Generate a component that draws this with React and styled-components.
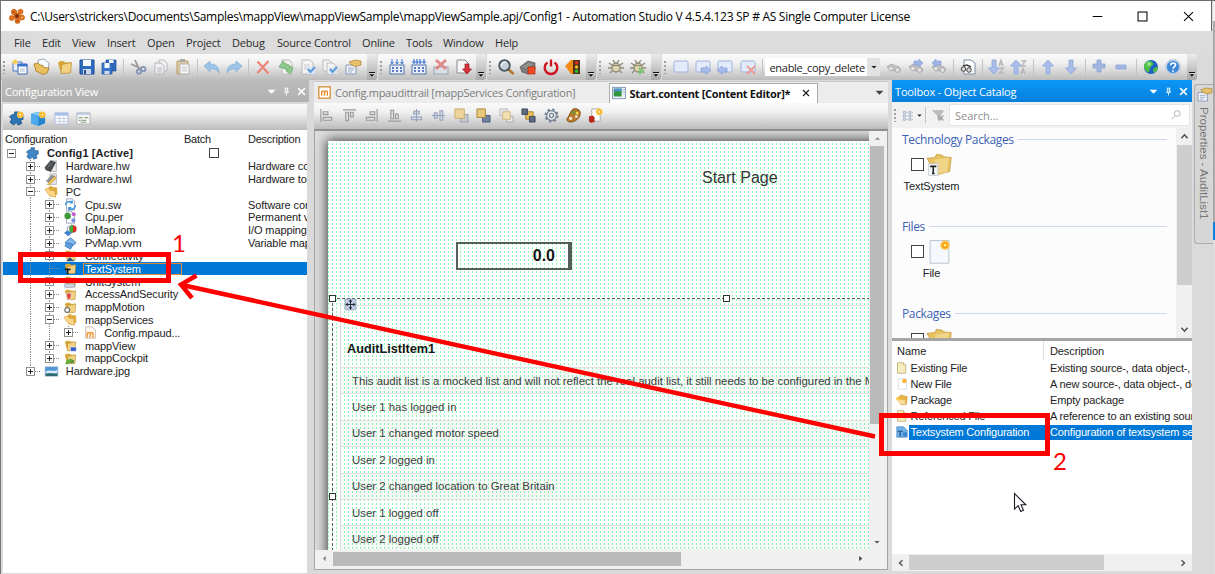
import React from "react";
import styled, { createGlobalStyle, css } from "styled-components";

const ui = `"Open Sans", "Noto Sans", sans-serif`;
const classic = `"Liberation Sans", Arial, sans-serif`;

const Global = createGlobalStyle`
  * { box-sizing: border-box; }
  body { margin: 0; background: #d8d8d8; overflow: hidden; font-family: ${ui}; }
`;

/* ---------- icons ---------- */

const folder = (
  <>
    <path d="M1 4l2-2 4 0 1.500 1.500 5 0 0 9-9.500 1.500z" fill="#d9a83a" />
    <path d="M4.500 5.500l10-2-1 10.500-9.500 0.500z" fill="#f3d283" stroke="#b98a2b" strokeWidth=".7" />
  </>
);
const pageShape = <path d="M3 1h7l3 3v11H3z" fill="#fdfdfd" stroke="#8f9db5" />;
const gear = (c) => (
  <g stroke={c} fill="none">
    <circle cx="8" cy="8" r="6.500" strokeWidth="2" strokeDasharray="2.550 2.550" />
    <circle cx="8" cy="8" r="5.200" strokeWidth="1.300" fill="#eef1f4" />
    <circle cx="8" cy="8" r="2.200" strokeWidth="1.400" />
  </g>
);
const bubble = <rect x="1" y="2" width="14" height="11" rx="1.500" fill="#e3ebfa" stroke="#9db2de" />;
const binoculars = (
  <g fill="#c4c4c4" stroke="#a6a6a6" strokeWidth=".8">
    <path d="M1 8l4-3 8 3 2 3-3 2.500-4-2-2 .5z" />
    <circle cx="5" cy="9.500" r="2.300" fill="#e4e4e4" />
    <circle cx="11.500" cy="11" r="2.300" fill="#e4e4e4" />
  </g>
);
const cluster = (c, d) => (
  <g fill={c} stroke={d} strokeWidth=".7">
    <circle cx="5" cy="4" r="2.700" />
    <circle cx="11.500" cy="3.700" r="2.500" />
    <circle cx="13" cy="9.500" r="2.500" />
    <circle cx="8.500" cy="13" r="2.500" />
    <circle cx="2.800" cy="10" r="2.500" />
    <circle cx="8" cy="8" r="3" />
  </g>
);
/* a four-armed block cross, tilted */
const puzzle = (c, d) => (
  <path
    d="M6 1h4.500v3.500H15V9h-2.500l1 4.500-4 1.500-1.500-3-3 3L1 12l2-3.500L.5 6 4 3.500l2 1z"
    fill={c}
    stroke={d}
    strokeWidth=".8"
  />
);
const bug = (
  <g stroke="#8f8975" fill="none" strokeWidth="1.300">
    <path d="M1 4l4 3M15 4l-4 3M0 9h4M12 9h4M2 14l3-3M14 14l-3-3M5 1l2 3M11 1l-2 3" />
    <ellipse cx="8" cy="8.500" rx="4" ry="4.500" fill="#dcd6ae" />
    <path d="M4.500 6.500h7" />
  </g>
);
const star = (
  <g>
    <circle cx="12" cy="4" r="3.600" fill="#ffc648" />
    <circle cx="12" cy="4" r="1.800" fill="#fff2a8" stroke="#f0a010" />
  </g>
);
const check = <path d="M8 10l2.500 3L15 8" fill="none" stroke="#5f9bd6" strokeWidth="2" />;
const binary = (
  <g>
    <rect x="1" y="6" width="14" height="9" fill="#e8eefc" stroke="#5672ad" />
    <path d="M3 9h2M7 9h2M11 9h2M3 12h2M7 12h2M11 12h2" stroke="#2c55b4" strokeWidth="1.600" />
  </g>
);
const downArrow = <path d="M6 1h4v8h3.500L8 15 2.500 9H6z" fill="#a9bee8" stroke="#8ba5da" strokeWidth=".8" />;
const upArrow = <path d="M6 15h4V7h3.500L8 1 2.500 7H6z" fill="#a9bee8" stroke="#8ba5da" strokeWidth=".8" />;

const glyphs = {
  logo: (
    <g>
      {cluster("#e0731f", "#c55c12")}
      <circle cx="8" cy="8" r="2" fill="#7c2d06" />
      <circle cx="5" cy="4" r="1" fill="#b8480b" />
      <circle cx="13" cy="9.500" r="1" fill="#ffb060" />
      <circle cx="8.500" cy="13" r="1" fill="#b8480b" />
    </g>
  ),
  newWindow: (
    <g>
      <path d="M1 3h9v9H1z" fill="#e9effb" stroke="#4e75bd" />
      <path d="M6 5h9v10H6z" fill="#fff" stroke="#3a67b5" />
      <path d="M5.500 5h10v2.500h-10z" fill="#3873d0" />
      <path d="M8 10h5M8 12h5" stroke="#a8b8d4" />
      <circle cx="3" cy="3" r="2.500" fill="#f8cf5a" />
    </g>
  ),
  openFile: (
    <g>
      <path d="M4 1l6-1 5 4-1 8H5z" fill="#f7f9fd" stroke="#8a94a8" strokeWidth=".8" />
      <path d="M0 5l4-1 2 2 3 .5 1 2 5 .5-2 5-4 1.500L2 12z" fill="#e9bf5f" stroke="#a67a20" strokeWidth=".8" />
    </g>
  ),
  folder,
  save: (
    <g>
      <path d="M1 1h14v14H1z" fill="#2f6cc0" stroke="#1d4d96" />
      <path d="M4 1h8v6H4z" fill="#f4f8ff" />
      <path d="M4 10h8v5H4z" fill="#cfd8e8" />
      <path d="M5 11h2v4H5z" fill="#1d4d96" />
    </g>
  ),
  saveAll: (
    <g>
      <path d="M5 1h10v11H5z" fill="#2f6cc0" stroke="#1d4d96" strokeWidth=".7" />
      <path d="M1 4h10v11H1z" fill="#3977cd" stroke="#1d4d96" strokeWidth=".7" />
      <path d="M3.500 4h5v5h-5zM8 1h4.500v3H8z" fill="#f4f8ff" />
      <path d="M3.500 12h5v3h-5z" fill="#cfd8e8" />
    </g>
  ),
  cut: (
    <g fill="none" stroke="#9a9a9a" strokeWidth="1.800">
      <path d="M5 1l4 9M1 5l10 4.500" />
      <circle cx="9" cy="12.500" r="2.200" stroke="#8496b4" />
      <circle cx="13.300" cy="10" r="2.200" stroke="#8496b4" />
    </g>
  ),
  copy: (
    <g fill="#f2f2f2" stroke="#b3b7bf">
      <path d="M6 1h5l3 3v8H6z" />
      <path d="M2 4h6l3 3v8H2z" />
      <path d="M4 9h5M4 11h5M4 13h5" />
    </g>
  ),
  paste: (
    <g>
      <path d="M2 2h11v13H2z" fill="#dfc9a0" stroke="#b79b6a" />
      <path d="M5 0h5v3H5z" fill="#aaa" />
      <path d="M5 5h9v10H5z" fill="#f6f6f6" stroke="#b5b5b5" />
      <path d="M7 8h5M7 10h5M7 12h5" stroke="#c9c9c9" />
    </g>
  ),
  undo: <path d="M0 7l6-5v3c6 0 9 3 9 9-2-3-4-4-9-4v3z" fill="#9cc4e6" stroke="#83afd6" strokeWidth=".7" />,
  redo: <path d="M16 7l-6-5v3c-6 0-9 3-9 9 2-3 4-4 9-4v3z" fill="#9cc4e6" stroke="#83afd6" strokeWidth=".7" />,
  del: <path d="M2.500 2.500l11 12M13.500 2l-11 12" stroke="#ee8377" strokeWidth="2.200" fill="none" />,
  refreshDoc: (
    <g>
      <path d="M4 1h7l3 3v11H4z" fill="#f1f1f1" stroke="#b9b9b9" />
      <path d="M1 8l4-6 3 3c3 0 4 2 4 4-2-2-3-1-4-1v2z" fill="#8fca8c" stroke="#65a863" strokeWidth=".7" />
      <path d="M15 9l-3 6-4-3 2-1c-2 0-3-1-3-2 2 1 5 0 5-2z" fill="#8fca8c" stroke="#65a863" strokeWidth=".7" />
    </g>
  ),
  docCheck: (
    <g>
      <path d="M2 1h8l3 3v11H2z" fill="#f4f4f4" stroke="#bbb" />
      <path d="M4 6h6M4 8h5M4 10h3" stroke="#ccc" />
      <rect x="7" y="8" width="8" height="7" fill="#d8e7f6" />
      {check}
    </g>
  ),
  docsCheck: (
    <g>
      <path d="M1 1h6l3 3v8H1z" fill="#f4f4f4" stroke="#bbb" />
      <path d="M5 4h6l3 3v8H5z" fill="#f4f4f4" stroke="#bbb" />
      <rect x="7" y="8" width="8" height="7" fill="#d8e7f6" />
      {check}
    </g>
  ),
  props: (
    <g>
      <path d="M1 6h10v9H1z" fill="#f2f4f9" stroke="#8795b4" />
      <path d="M3 9h6M3 11h6M3 13h4" stroke="#9daccd" />
      <path d="M4 3l6-2 6 1v4l-6 1.500-4-2z" fill="#e6c06a" stroke="#a98133" strokeWidth=".7" />
    </g>
  ),
  build: (
    <g>
      {binary}
      <path d="M3 0v4M8 0v4M13 0v4M1.500 3l1.500 2 1.500-2M6.500 3L8 5l1.500-2M11.500 3L13 5l1.500-2" stroke="#3b76d8" fill="none" />
    </g>
  ),
  rebuild: (
    <g>
      {binary}
      <path d="M1 3h14M3 0v5M6 0v5M9 0v5M13 0v5" stroke="#3b76d8" fill="none" strokeWidth="1.200" />
    </g>
  ),
  buildStop: (
    <g>
      <rect x="1" y="8" width="14" height="7" fill="#dcdfe6" stroke="#9aa3b4" />
      <path d="M3 1l10 9M13 1L3 10" stroke="#e08a88" strokeWidth="3" />
    </g>
  ),
  transfer: (
    <g>
      <path d="M1 1h8l3 3v10H1z" fill="#f5f5f5" stroke="#8d8d8d" />
      <path d="M9 5h4v5h2.500L11 15 6.500 10H9z" fill="#d6323a" stroke="#9b141b" strokeWidth=".7" />
    </g>
  ),
  inspect: (
    <g>
      <path d="M9.500 9.500l6 5.500" stroke="#b5772d" strokeWidth="2.800" />
      <circle cx="6.500" cy="6.500" r="5.300" fill="#c3d0d8" stroke="#4a545c" strokeWidth="1.800" />
      <path d="M3 7c1-3 3-4 5-4" stroke="#fff" fill="none" />
    </g>
  ),
  plc: (
    <g>
      <path d="M0 8l8-6 7 2v7l-7 4-6-2z" fill="#7b7b7b" stroke="#555" strokeWidth=".7" />
      <path d="M3 8l7-4M5 9l7-4" stroke="#aaa" />
      <rect x="8" y="8" width="7" height="7" fill="#ee4a24" stroke="#b12a0b" strokeWidth=".7" />
    </g>
  ),
  power: (
    <g fill="none" stroke="#cf1620" strokeWidth="2.400">
      <path d="M4.500 3.500a6.300 6.300 0 1 0 7 0" />
      <path d="M8 .5v7" />
    </g>
  ),
  traffic: (
    <g>
      <path d="M0 7l6-6h9v14H6z" fill="#f28a17" />
      <rect x="8" y="1" width="7" height="14" fill="#51331b" />
      <circle cx="11.500" cy="3.700" r="1.700" fill="#ed2a1c" />
      <circle cx="11.500" cy="8" r="1.700" fill="#e3c32a" />
      <circle cx="11.500" cy="12.300" r="1.700" fill="#25c32f" />
    </g>
  ),
  bug,
  bugRun: (
    <g>
      {bug}
      <path d="M9 8l6 4-6 4z" fill="#7fc378" />
    </g>
  ),
  bubble,
  bubbleNext: (
    <g>
      {bubble}
      <path d="M6 9h5V7l4.500 4-4.500 4.500V13H6z" fill="#a9bdec" stroke="#7f98d2" strokeWidth=".7" />
    </g>
  ),
  bubblePrev: (
    <g>
      {bubble}
      <path d="M10 9H5V7L.5 11 5 15.500V13h5z" fill="#a9bdec" stroke="#7f98d2" strokeWidth=".7" />
    </g>
  ),
  bubbleDel: (
    <g>
      {bubble}
      <path d="M7 7l8 8M15 7l-8 8" stroke="#ea9c95" strokeWidth="2" />
    </g>
  ),
  find: binoculars,
  findNext: (
    <g>
      {binoculars}
      <path d="M6 2h5V0l4 4-4 4V6H6z" fill="#9db5e6" stroke="#839fd8" strokeWidth=".6" />
    </g>
  ),
  findPrev: (
    <g>
      {binoculars}
      <path d="M10 2H5V0L1 4l4 4V6h5z" fill="#9db5e6" stroke="#839fd8" strokeWidth=".6" />
    </g>
  ),
  findDoc: (
    <g>
      <path d="M4 1h7l4 3v11H4z" fill="#fff" stroke="#7d8aa5" />
      <g fill="#d5d5d5" stroke="#444">
        <circle cx="3.500" cy="10" r="2.300" />
        <circle cx="9" cy="11" r="2.300" />
        <path d="M3 7l4-1 4 2" fill="none" strokeWidth="1.600" />
      </g>
    </g>
  ),
  sortDown: (
    <g>
      <g transform="translate(-3 0)">{downArrow}</g>
      <path d="M10 7l2-6 2 6M11 5h2.500M10.500 9h4l-4 5h4.500" fill="none" stroke="#b7b7bb" strokeWidth="1.300" />
    </g>
  ),
  sortUp: (
    <g>
      <g transform="translate(-3 0)">{upArrow}</g>
      <path d="M10.500 2h4l-4 5h4.500M10 15l2-6 2 6M11 13h2.500" fill="none" stroke="#b7b7bb" strokeWidth="1.300" />
    </g>
  ),
  up: upArrow,
  down: downArrow,
  plus: <path d="M5 1h4v4h4v4H9v4H5V9H1V5h4z" fill="#a3b6e2" stroke="#8da3d5" strokeWidth=".8" />,
  minus: <path d="M2 6h10v4H2z" fill="#a3b6e2" stroke="#8da3d5" strokeWidth=".8" />,
  globe: (
    <g>
      <circle cx="8" cy="8" r="7" fill="#1e62c4" />
      <path d="M3 3c3-2 6-1 7 1s-2 3-3 5 0 4-2 4-4-4-4-6 1-3 2-4zM11 9c2-1 3-1 4-1 0 3-2 5-4 6-1-2-1-4 0-5z" fill="#4fbf45" />
      <circle cx="6" cy="5" r="2" fill="#c8f0c0" opacity=".6" />
    </g>
  ),
  help: (
    <g>
      <circle cx="8" cy="8" r="7" fill="#3d86d8" stroke="#b9cbe0" strokeWidth="1.800" />
      <path d="M5.700 6.300c0-3 4.800-3 4.800-.3C10.500 8 8 7.700 8 9.800M8 11.200v1.600" stroke="#fff" strokeWidth="1.700" fill="none" />
    </g>
  ),
  clusterNew: (
    <g>
      {puzzle("#2f74b4", "#184a7d")}
      {star}
    </g>
  ),
  cluster: puzzle("#3f87c6", "#205a91"),
  boxNew: (
    <g>
      <path d="M0 3l6-2 9 1v11l-7 3-8-3z" fill="#2384d0" />
      <path d="M0 3l8 2v11l-8-3z" fill="#4dabec" />
      <path d="M0 3l6-2 9 1-7 3z" fill="#8bcdf6" />
      {star}
    </g>
  ),
  table: (
    <g>
      <path d="M1 2h14v12H1z" fill="#fff" stroke="#a8b8d8" />
      <path d="M1 2h14v3H1z" fill="#a9c0ec" />
      <path d="M1 8h14M1 11h14M6 5v9M10.500 5v9" stroke="#c3cde0" />
    </g>
  ),
  form: (
    <g>
      <path d="M1 2h14v12H1z" fill="#f6f6f6" stroke="#b4b4b4" />
      <path d="M1 2h14v2H1z" fill="#b9c7e0" />
      <path d="M3 7h4M9 7h4M3 10h2M6 10h5M5 12h6" stroke="#8fa386" strokeWidth="1.300" />
    </g>
  ),
  alignLeft: <path d="M2 1v14M4.500 4h5v3h-5zM4.500 10h9v3h-9z" stroke="#9b9b9b" fill="#ddd" strokeWidth="1.200" />,
  alignTop: <path d="M1 2h14M4 4.500h3v9H4zM9 4.500h3v5H9z" stroke="#9b9b9b" fill="#ddd" strokeWidth="1.200" />,
  alignRight: <path d="M14 1v14M6.500 4h5v3h-5zM2.500 10h9v3h-9z" stroke="#9b9b9b" fill="#ddd" strokeWidth="1.200" />,
  alignBottom: <path d="M1 14h14M4 2.500h3v9H4zM9 6.500h3v5H9z" stroke="#9b9b9b" fill="#ddd" strokeWidth="1.200" />,
  centerV: <path d="M8 1v14M5 3.500h6v3H5zM2.500 9.500h11v3h-11z" stroke="#96a2b8" fill="#cfd9ea" strokeWidth="1.100" />,
  centerH: <path d="M1 8h14M3.500 5h3v6h-3zM9.500 3h3v10h-3z" stroke="#96a2b8" fill="#cfd9ea" strokeWidth="1.100" />,
  front: (
    <g>
      <path d="M7 7h8v8H7z" fill="#c3c8d2" stroke="#9aa1ad" />
      <path d="M1 1h10v10H1z" fill="#ecd49a" stroke="#c7aa66" />
    </g>
  ),
  forward: (
    <g>
      <path d="M7 8h8v7H7z" fill="#7383a3" stroke="#4b5a78" />
      <path d="M1 1h9v9H1z" fill="#ebc97c" stroke="#a98436" />
    </g>
  ),
  backward: (
    <g>
      <path d="M1 1h8v7H1z" fill="#e6e6e6" stroke="#bbb" />
      <path d="M8 9h7v6H8z" fill="#e6e6e6" stroke="#aaa" />
      <path d="M4 4h8v8H4z" fill="#f1dfb1" stroke="#d0b984" />
    </g>
  ),
  back: (
    <g>
      <path d="M5 4h8v8H5z" fill="#ebc050" stroke="#a98436" />
      <path d="M1 1h6v6H1zM9 9h6v6H9z" fill="#5e6a80" stroke="#3b475d" />
    </g>
  ),
  gear: gear("#72808f"),
  palette: (
    <g>
      <path d="M8 1c5-1 8 2 7 6s-5 8-10 8c-4 0-5-3-3-5s3-8 6-9z" fill="#b87a2c" stroke="#7c4b12" />
      <circle cx="8" cy="4.500" r="1.500" fill="#4aa43a" />
      <circle cx="12" cy="5.500" r="1.400" fill="#f3e15c" />
      <circle cx="11" cy="9" r="1.400" fill="#f0f0f0" />
      <circle cx="5" cy="11" r="1.800" fill="#f8ead0" />
    </g>
  ),
  docStar: (
    <g>
      <path d="M4 1h9v13H4z" fill="#fdfdfd" stroke="#a9a9a9" />
      <path d="M1 9l4-1 2 2v5l-4 1-2-2z" fill="#b9281f" />
      {star}
    </g>
  ),
  mfile: (
    <g>
      <rect x="1" y="1" width="14" height="14" fill="#fff" stroke="#d69a48" strokeWidth="1.800" />
      <path d="M4.500 12V6M4.500 7.500c1-2 3.500-2 3.500 0V12M8 7.500c1-2 3.500-2 3.500 0V12" fill="none" stroke="#e88a22" strokeWidth="1.600" />
    </g>
  ),
  contentFile: (
    <g>
      <rect x=".5" y="1.500" width="15" height="13" fill="#eef3f8" stroke="#7593b3" />
      <path d="M2 3h9v9H2z" fill="#2f9540" />
      <path d="M2 3h9v3H2z" fill="#4f92d6" />
      <path d="M12 4h3M12 6h3M12 8h3" stroke="#b5c3d1" />
    </g>
  ),
  hw: (
    <g>
      <path d="M6 1h8v13H6z" fill="#e9e9e9" stroke="#b0b0b0" />
      <path d="M0 9l7-8 6 2-6 11-6-2z" fill="#4b4f55" stroke="#25282c" strokeWidth=".7" />
      <path d="M3 9l5-5" stroke="#8b9098" />
    </g>
  ),
  hwl: (
    <g>
      <path d="M6 1h8v13H6z" fill="#e9e9e9" stroke="#b0b0b0" />
      <path d="M1 10l7-8 5 2-6 9z" fill="#8d9299" />
      <path d="M4 12L12 4l2 2-8 8-3 1z" fill="#f2ca5d" stroke="#a88122" strokeWidth=".7" />
    </g>
  ),
  sw: (
    <g>
      {pageShape}
      <path d="M2 9c0-5 6-6 8-3M10 3v3H7M14 9c0 5-6 6-8 3M6 15v-3h3" fill="none" stroke="#3f93dd" strokeWidth="1.800" />
    </g>
  ),
  per: (
    <g>
      {pageShape}
      <circle cx="4.500" cy="6" r="4" fill="#3f9a35" />
      <circle cx="12" cy="4" r="2.500" fill="#cb5bd0" />
      <circle cx="11.500" cy="11.500" r="2.500" fill="#7a8de0" />
    </g>
  ),
  iom: (
    <g>
      <path d="M4 4l6-3v10l-6 3z" fill="#eef4ff" stroke="#7b8fb5" />
      <circle cx="11" cy="6" r="4.500" fill="#dc2b25" />
      <path d="M11 1.500a4.500 4.500 0 0 0 0 9z" fill="#3eb23a" />
      <path d="M0 11l4-3 5 2-3 5z" fill="#3b83cf" />
    </g>
  ),
  vvm: (
    <g>
      <path d="M8 1l7 6-7 6-7-6z" fill="#82b8ea" stroke="#2e70b5" />
      <path d="M4 7l7 2-3 6-7-4z" fill="#5a9fe0" stroke="#2e70b5" strokeWidth=".8" />
    </g>
  ),
  folderNet: (
    <g>
      {folder}
      <path d="M3 15l4-5 6 5z" fill="#29537e" />
    </g>
  ),
  folderText: (
    <g>
      {folder}
      <path d="M1 9h7M4.500 9v6" stroke="#1a1a1a" strokeWidth="2" />
    </g>
  ),
  folderUnit: (
    <g>
      {folder}
      <path d="M1 11h12v4H1z" fill="#d9dfe8" stroke="#6a7688" strokeWidth=".7" />
    </g>
  ),
  folderShield: (
    <g>
      {folder}
      <path d="M3 7l3-1 3 1c0 4-1 6-3 8-2-2-3-4-3-8z" fill="#dd4639" stroke="#ddd" />
    </g>
  ),
  folderGear: (
    <g>
      {folder}
      <circle cx="4" cy="11" r="3" fill="#f2f2f2" stroke="#6c6c6c" strokeWidth="1.400" />
    </g>
  ),
  folderOpen: (
    <g>
      <path d="M4 3l3-2 3 1.500 5 .5v9l-9 2z" fill="#e0aa40" />
      <path d="M0 5l4-1 2.500 2.500L12 7l1 8-7-1.500L3 10z" fill="#fbd68a" stroke="#cf9430" strokeWidth=".7" />
    </g>
  ),
  folderView: (
    <g>
      {folder}
      <path d="M8 10h7v5H8z" fill="#2c56c9" stroke="#dfe6fa" strokeWidth=".7" />
    </g>
  ),
  folderCockpit: (
    <g>
      {folder}
      <path d="M2 15a5.500 5.500 0 0 1 11-2l-3 1a3 3 0 0 0-5 1z" fill="#5fae3a" />
      <path d="M8 14l4-4" stroke="#444" />
    </g>
  ),
  mdoc: (
    <g>
      <path d="M2 1h8l4 4v10H2z" fill="#fdf8f2" stroke="#bfb3a4" />
      <path d="M4 14V8M4 9.500c1-2 3.500-1.500 3.500 0V14M7.500 9.500c1-2 3.500-1.500 3.500 0V14" fill="none" stroke="#ef8e25" strokeWidth="1.600" />
    </g>
  ),
  image: (
    <g>
      <path d="M0 2h16v12H0z" fill="#4d97d8" stroke="#c3cfdb" />
      <path d="M1 8c4-3 8 1 14-2v4H1z" fill="#d9ecf8" />
      <path d="M1 11c5-2 9 1 14-1v3.500H1z" fill="#2f6a6e" />
    </g>
  ),
  fileStar: (
    <g>
      <path d="M2 1h12v14.500H2z" fill="#f5f9fd" stroke="#b5c1cc" strokeWidth=".6" />
      <circle cx="11.500" cy="4" r="3" fill="#ffc44a" />
      <circle cx="11.500" cy="4" r="1.400" fill="#fff07a" stroke="#f59a14" strokeWidth=".9" />
    </g>
  ),
  fileNew: (
    <g>
      <path d="M3 1h11v14H3z" fill="#fff" stroke="#cfd6dd" />
      <circle cx="11" cy="4" r="3" fill="#ffb53a" />
    </g>
  ),
  fileYellow: (
    <g>
      <path d="M2 1h8l3 3v11H2z" fill="#f8edc0" stroke="#b9a86b" />
      <path d="M10 1v3h3" fill="#fff" stroke="#b9a86b" />
    </g>
  ),
  package: (
    <g>
      <path d="M4 3l3-1.500 8 2-1 10-7 1z" fill="#e9b646" stroke="#c0892a" strokeWidth=".7" />
      <path d="M0 6l5 0 2 2 5-.5 1 6-7 .5-3-4z" fill="#fadf9e" stroke="#d6a347" strokeWidth=".5" />
      <circle cx="3" cy="6" r="2.500" fill="#ffc63b" />
    </g>
  ),
  tconfig: (
    <g>
      <path d="M1 1h9l5 5v9H1z" fill="#6eb0ea" stroke="#2a6fb3" strokeWidth=".7" />
      <path d="M2 7h7M5.500 7v7" stroke="#1f4f80" strokeWidth="1.600" />
      <circle cx="12" cy="11" r="3" fill="#3c86cd" />
    </g>
  ),
  folderBigT: (
    <g>
      <path d="M0 4l5-.5 1-2 4 .6.500 1 5 .4-1 9-8 2-3-4z" fill="#e6c15e" stroke="#ba8f35" strokeWidth=".4" />
      <path d="M5 5l9-1.500-1 9.500-7 1z" fill="#f0d488" />
      <path d="M1 7.500h6v7.500H1z" fill="#f2f4f6" stroke="#b5bcc3" strokeWidth=".4" />
      <path d="M2 9.200h4M4 9.200v4.500M3.200 13.700h1.600" stroke="#222" />
    </g>
  ),
  folderBig: (
    <g>
      <path d="M0 4l5-.5 1-2 4 .6.500 1 5 .4-1 9-8 2-3-4z" fill="#e6c15e" stroke="#ba8f35" strokeWidth=".4" />
      <path d="M5 5l9-1.500-1 9.500-7 1z" fill="#f0d488" />
    </g>
  ),
  listView: <path d="M2 2h3v3H2zM10 2h3v3h-3zM2 7h3v3H2zM10 7h3v3h-3zM2 12h3v3H2zM10 12h3v3h-3zM6 3.500h2M14 3.500h2M6 8.500h2M14 8.500h2M6 13.500h2M14 13.500h2" fill="#e6edf8" stroke="#8a9ab4" strokeWidth=".9" />,
  filterOff: (
    <g>
      <path d="M1 2h13l-4 6v6l-3-2V8z" fill="#bdbdbd" stroke="#9c9c9c" strokeWidth=".7" />
      <path d="M8 8l6 6M14 8l-6 6" stroke="#a4a4a4" strokeWidth="1.800" />
    </g>
  ),
  search: (
    <g fill="none" stroke="#b5b5b5" strokeWidth="1.600">
      <circle cx="10" cy="5.500" r="4.500" />
      <path d="M7 8.500L1 15" />
    </g>
  ),
  pin: <path d="M5 2h6M6 2v7M10.300 2v7M9.300 2v7M3.500 9.500h9M8 10v5" stroke="currentColor" strokeWidth="1.500" fill="none" />,
  close: <path d="M2 2l12 12M14 2L2 14" stroke="currentColor" strokeWidth="2.600" fill="none" />,
  closeThin: <path d="M1.500 1.500l13 13M14.500 1.500l-13 13" stroke="currentColor" strokeWidth="1.500" fill="none" />,
  minimize: <path d="M1 8h14" stroke="currentColor" strokeWidth="1.500" />,
  maximize: <rect x="1.500" y="1.500" width="13" height="13" stroke="currentColor" strokeWidth="1.500" fill="none" />,
  caretDown: <path d="M1 5h14l-7 7z" fill="currentColor" />,
  chevUp: <path d="M2.500 11L8 5l5.500 6" stroke="currentColor" strokeWidth="2.800" fill="none" />,
  chevDown: <path d="M2.500 5L8 11l5.500-6" stroke="currentColor" strokeWidth="2.800" fill="none" />,
  chevLeft: <path d="M11 2.500L5 8l6 5.500" stroke="currentColor" strokeWidth="2.800" fill="none" />,
  chevRight: <path d="M5 2.500L11 8l-6 5.500" stroke="currentColor" strokeWidth="2.800" fill="none" />,
  triUp: <path d="M2 11h12L8 5z" fill="currentColor" />,
  triLeft: <path d="M11 2v12L4 8z" fill="currentColor" />,
  triRight: <path d="M5 2v12l7-6z" fill="currentColor" />,
  overflow: (
    <g fill="currentColor">
      <path d="M2 4h12v2H2zM3 8.500h10l-5 5z" />
      <path d="M4 7.200h11M9 14l5-5" stroke="#fff" />
    </g>
  ),
  move: (
    <g>
      <rect x="0" y="0" width="16" height="16" rx="1.500" fill="#c4cde3" stroke="#8f9cc2" />
      <path d="M8 2v12M2 8h12" stroke="#1d2333" strokeWidth="1.400" />
      <path d="M8 .5l2.500 3.500h-5zM8 15.500L5.500 12h5zM.5 8L4 5.500v5zM15.500 8L12 5.500v5z" fill="#1d2333" />
    </g>
  ),
};

const Svg = styled.svg`
  display: block;
  flex: none;
  width: ${(p) => p.$size}px;
  height: ${(p) => p.$size}px;
  color: ${(p) => p.$color || "#222"};
  overflow: visible;
`;
const Icon = ({ name, size = 16, color }) => (
  <Svg viewBox="0 0 16 16" $size={size} $color={color}>
    {glyphs[name]}
  </Svg>
);

/* ---------- window frame ---------- */

const Screen = styled.div`
  position: relative;
  width: 1215px;
  height: 574px;
  overflow: hidden;
  display: flex;
  background: #d8d8d8;
  border-top: 1px solid #6b6b70;
  border-left: 1px solid #77777b;
`;
const Window = styled.div`
  width: 1212px;
  display: flex;
  flex-direction: column;
  background: #dadada;
`;
const Backdrop = styled.div`
  flex: 1;
  background: linear-gradient(#f3f3f3 0 20px, #a9a9a9 20px 221px, #1281da 221px 239px, #dedede 239px);
`;
const TitleBar = styled.header`
  height: 30px;
  width: 1211px;
  display: flex;
  align-items: center;
  padding-left: 8px;
  background: #fff;
  border-right: 1px solid #66666a;
`;
const Title = styled.h1`
  flex: 1;
  margin: 0 0 0 5px;
  font: 400 12px ${ui};
  letter-spacing: -0.287px;
  color: #000;
  white-space: nowrap;
`;
const WindowButton = styled.span`
  width: 45.500px;
  display: flex;
  justify-content: center;
`;
const MenuBar = styled.nav`
  height: 23px;
  display: flex;
  align-items: center;
  padding-left: 13px;
  background: #dcdcdc;
`;
const MenuItem = styled.span`
  width: ${(p) => p.$width}px;
  font-size: 11px;
  letter-spacing: -0.18px;
  color: #2b2b2b;
  white-space: nowrap;
`;
const menus = [
  ["File", 28], ["Edit", 30], ["View", 35], ["Insert", 40], ["Open", 39], ["Project", 46],
  ["Debug", 45], ["Source Control", 85], ["Online", 44], ["Tools", 37], ["Window", 52], ["Help", 30],
];

/* ---------- toolbars ---------- */

const ToolbarRow = styled.div`
  height: 26px;
  display: flex;
`;
const barFill = css`
  background: linear-gradient(#fafafa, #f0f0f0 35%, #bcbcbc);
`;
const ToolGroup = styled.div`
  ${barFill}
  flex: none;
  width: ${(p) => p.$width}px;
  margin-right: 1px;
  display: flex;
  align-items: center;
  border-radius: 0 3px 3px 0;
`;
const Grip = styled.span`
  flex: none;
  width: 2px;
  height: 13px;
  margin: 0 ${(p) => (p.$gap === undefined ? 4 : p.$gap)}px 0 2px;
  background: repeating-linear-gradient(#a0a0a0 0 2px, transparent 2px 4px);
`;
const Slot = styled.span`
  flex: none;
  width: ${(p) => p.$width || 22.300}px;
  height: 20px;
  display: flex;
  align-items: center;
  justify-content: center;
`;
const Separator = styled.span`
  flex: none;
  width: 1px;
  height: 16px;
  margin: 0 2.900px;
  background: #c3c3c3;
`;
const Overflow = styled.span`
  flex: none;
  width: 10px;
  height: 26px;
  margin-left: auto;
  padding-bottom: 2px;
  display: flex;
  align-items: flex-end;
  justify-content: center;
  border-radius: 0 3px 3px 0;
  background: linear-gradient(#ececec, #a8a8a8);
`;
const Combo = styled.span`
  flex: none;
  width: 115px;
  height: 18px;
  margin: 0 2.500px 0 0;
  padding-left: 4px;
  display: flex;
  align-items: center;
  justify-content: space-between;
  background: #fff;
  font-size: 11px;
  letter-spacing: -0.28px;
  color: #222;
`;
const ComboButton = styled.span`
  flex: none;
  width: 13px;
  height: 18px;
  display: flex;
  align-items: center;
  justify-content: center;
  background: #e2e2e2;
`;

const groups = [
  { width: 375.500, icons: ["newWindow", "openFile", "folder", "save", "saveAll", "|", "cut", "copy", "paste", "|", "undo", "redo", "|", "del", "refreshDoc", "docCheck", "docsCheck", "props"] },
  { width: 108.500, icons: ["build", "rebuild", "buildStop", "transfer"] },
  { width: 108.500, icons: ["inspect", "plc", "power", "traffic"] },
  { width: 64, icons: ["bug", "bugRun"] },
  { width: 535, icons: ["bubble", "bubbleNext", "bubblePrev", "bubbleDel", "|", "combo", "find", "findNext", "findPrev", "|", "findDoc", "|", "sortDown", "sortUp", "|", "up", "down", "|", "plus", "minus", "|", "globe", "help"] },
];

const ToolItem = ({ name }) => {
  if (name === "|") return <Separator />;
  if (name === "combo")
    return (
      <Combo>
        enable_copy_delete
        <ComboButton>
          <Icon name="caretDown" size={6} />
        </ComboButton>
      </Combo>
    );
  return (
    <Slot>
      <Icon name={name} size={16} />
    </Slot>
  );
};

/* ---------- panels ---------- */

const Workspace = styled.main`
  flex: 1;
  min-height: 0;
  display: flex;
`;
const PanelHeader = styled.div`
  height: 22px;
  padding: 0 ${(p) => (p.$active ? 4 : 3)}px 0 3px;
  display: flex;
  align-items: center;
  gap: 6px;
  color: #fff;
  font-size: 11px;
  letter-spacing: ${(p) => (p.$active ? "-0.16px" : "-0.22px")};
  background: ${(p) => (p.$active ? "linear-gradient(#0b97f8, #0580dc)" : "linear-gradient(#bcbcbc, #b1b1b1)")};
`;
const PanelTitle = styled.span`
  flex: 1;
  white-space: nowrap;
`;

const ConfigPanel = styled.section`
  width: 308px;
  height: 493px;
  display: flex;
  flex-direction: column;
  padding-left: 1px;
`;
const ConfigBody = styled.div`
  flex: 1;
  width: 304px;
  margin-top: 2px;
  margin-left: 1px;
  background: #fff;
`;
const PanelTools = styled.div`
  ${barFill}
  height: 26px;
  padding: ${(p) => p.$top}px 0 ${(p) => p.$bottom || 0}px ${(p) => p.$left}px;
  display: flex;
  align-items: center;
`;
const TreeHeader = styled.div`
  height: 17px;
  display: flex;
  align-items: center;
  padding-left: 2px;
  font: 11px ${classic};
  letter-spacing: -0.25px;
  color: #222;
`;
const TreeHeadCell = styled.span`
  flex: none;
  width: ${(p) => p.$width}px;
  white-space: nowrap;
`;
const TreeRow = styled.div`
  height: 12.820px;
  display: flex;
  align-items: center;
  font: 11px ${classic};
  letter-spacing: -0.1px;
  color: ${(p) => (p.$selected ? "#fff" : "#222")};
  background: ${(p) => (p.$selected ? "#0078d7" : "transparent")};
  white-space: nowrap;
  overflow: hidden;
`;
const TreeName = styled.div`
  flex: none;
  width: 245px;
  height: 100%;
  display: flex;
  align-items: center;
  padding-left: ${(p) => (p.$root ? 0 : 17.600)}px;
`;
const Guide = styled.span`
  flex: none;
  width: 19.200px;
  height: 100%;
  display: flex;
  align-items: center;
  justify-content: center;
  background:
    ${(p) => p.$branch && "repeating-linear-gradient(90deg, #888 0 1px, transparent 1px 2px) 10px 50% / 10px 1px no-repeat,"}
    repeating-linear-gradient(#888 0 1px, transparent 1px 2px) 9px 0 / 1px ${(p) => (p.$last ? "50%" : "100%")} no-repeat;
`;
const ExpanderBox = styled.span`
  width: 9px;
  height: 9px;
  border: 1px solid #919191;
  background:
    linear-gradient(#222, #222) 50% 50% / 5px 1px no-repeat,
    ${(p) => !p.$open && "linear-gradient(#222, #222) 50% 50% / 1px 5px no-repeat,"}
    #fff;
`;
const RootExpander = styled.span`
  margin: 0 2px 0 4px;
  display: flex;
`;
const TreeIcon = styled.span`
  flex: none;
  width: ${(p) => p.$width || 24}px;
  display: flex;
  justify-content: center;
`;
const TreeLabel = styled.span`
  padding: 0 3px 0 2px;
  width: ${(p) => (p.$editing ? "99px" : "auto")};
  height: 12px;
  line-height: 12px;
  box-shadow: ${(p) => (p.$editing ? "inset 0 0 0 1px #e08a35" : "none")};
`;
const RootLabel = styled.span`
  font-weight: 700;
  font-size: 11px;
  letter-spacing: 0.100px;
`;
const Checkbox = styled.span`
  display: block;
  flex: none;
  width: ${(p) => p.$size}px;
  height: ${(p) => p.$size}px;
  border: 1px solid #444;
  background: #fff;
`;
const BatchCell = styled.span`
  margin-left: auto;
  margin-right: 29px;
`;

const tree = [
  { level: 1, name: "Hardware.hw", icon: "hw", desc: "Hardware configuration" },
  { level: 1, name: "Hardware.hwl", icon: "hwl", desc: "Hardware topology" },
  { level: 1, name: "PC", icon: "folderOpen", open: true },
  { level: 2, name: "Cpu.sw", icon: "sw", desc: "Software configuration" },
  { level: 2, name: "Cpu.per", icon: "per", desc: "Permanent variables" },
  { level: 2, name: "IoMap.iom", icon: "iom", desc: "I/O mapping" },
  { level: 2, name: "PvMap.vvm", icon: "vvm", desc: "Variable mapping" },
  { level: 2, name: "Connectivity", icon: "folderNet" },
  { level: 2, name: "TextSystem", icon: "folderText", selected: true, leaf: true },
  { level: 2, name: "UnitSystem", icon: "folderUnit" },
  { level: 2, name: "AccessAndSecurity", icon: "folderShield" },
  { level: 2, name: "mappMotion", icon: "folderGear" },
  { level: 2, name: "mappServices", icon: "folderOpen", open: true },
  { level: 3, name: "Config.mpaud...", icon: "mdoc", last: true },
  { level: 2, name: "mappView", icon: "folderView" },
  { level: 2, name: "mappCockpit", icon: "folderCockpit", last: true },
  { level: 1, name: "Hardware.jpg", icon: "image", last: true },
];

/* ---------- editor ---------- */

const Editor = styled.section`
  width: 574px;
  margin-left: 5px;
  display: flex;
  flex-direction: column;
  height: 490px;
`;
const TabStrip = styled.div`
  height: 22px;
  margin-top: 1px;
  display: flex;
  align-items: center;
  background: #ececec;
  border-top: 1px solid #c9c9c9;
`;
const Tab = styled.div`
  flex: none;
  height: 20px;
  width: ${(p) => p.$width}px;
  padding-left: ${(p) => (p.$active ? 2 : 4)}px;
  display: flex;
  align-items: center;
  gap: ${(p) => (p.$active ? 3.500 : 4)}px;
  white-space: nowrap;
  font-size: 11px;
  ${(p) =>
    p.$active
      ? "background:#fff;border:1px solid #aaa;border-bottom:0;font-weight:700;color:#111;letter-spacing:-0.29px;"
      : "color:#7c7c7c;letter-spacing:-0.27px;"}
`;
const TabEnd = styled.span`
  margin-left: auto;
  padding-right: ${(p) => p.$pad}px;
`;
const EditorFrame = styled.div`
  flex: 1;
  min-height: 0;
  display: flex;
  flex-direction: column;
  padding: 0 2px 2px 0;
  border: 1px solid #a4a4a4;
  border-top: 2px solid #8f8f8f;
  background: #f0f0f0;
`;
const EditorMain = styled.div`
  flex: 1;
  min-height: 0;
  display: flex;
`;
const Viewport = styled.div`
  flex: 1;
  overflow: hidden;
  padding: 10px 0 0 13px;
  background: #dcdcdc;
`;
const Canvas = styled.div`
  position: relative;
  width: 700px;
  height: 500px;
  background:
    repeating-linear-gradient(#fff 0 2px, transparent 2px 4px),
    repeating-linear-gradient(90deg, #8dfcb1 0 1px, #fcfffd 1px 4px);
  box-shadow: 0 0 11px 1px rgba(0, 0, 0, 0.75);
`;
const PageTitle = styled.div`
  position: absolute;
  left: 374px;
  top: 28px;
  font: 16px ${classic};
  color: #333;
`;
const NumericBox = styled.div`
  position: absolute;
  left: 128px;
  top: 100.500px;
  width: 116px;
  height: 28px;
  padding-right: 13px;
  display: flex;
  align-items: center;
  justify-content: flex-end;
  border: 2px solid #555e58;
  border-right-width: 4px;
  font: 700 16px ${classic};
  color: #161616;
`;
const Selection = styled.div`
  position: absolute;
  left: 4px;
  top: 157px;
  width: 788px;
  height: 398px;
  border: 1px dashed #5a5a5a;
`;
const Handle = styled.span`
  position: absolute;
  left: ${(p) => p.$x}px;
  top: ${(p) => p.$y}px;
  width: 7px;
  height: 7px;
  border: 1px solid #333;
  background: #fff;
`;
const MoveHandle = styled.span`
  position: absolute;
  left: 12px;
  top: 0;
`;
const AuditList = styled.div`
  margin: 6px 0 0 7px;
  border-left: 1px solid #dedede;
  border-top: 1px solid #e6e6e6;
`;
const AuditTitle = styled.div`
  height: 61px;
  padding: 36px 0 0 6px;
  font: 700 12.700px ${classic};
  color: #161616;
`;
const AuditRow = styled.div`
  height: 26.400px;
  padding-left: 11px;
  display: flex;
  align-items: center;
  border-top: 1px solid #dde2de;
  font: 11.400px ${classic};
  color: #3c3c3c;
  white-space: nowrap;
  background: ${(p) => (p.$alt ? "rgba(110,120,115,.055)" : "transparent")};
`;
const auditRows = [
  "This audit list is a mocked list and will not reflect the real audit list, it still needs to be configured in the Mapp",
  "User 1 has logged in",
  "User 1 changed motor speed",
  "User 2 logged in",
  "User 2 changed location to Great Britain",
  "User 1 logged off",
  "User 2 logged off",
];

const VScroll = styled.div`
  width: ${(p) => p.$width}px;
  display: flex;
  flex-direction: column;
  align-items: center;
  background: #f0f0f0;
`;
const HScroll = styled.div`
  height: ${(p) => p.$height}px;
  display: flex;
  align-items: center;
  background: #f0f0f0;
`;
const ArrowCell = styled.span`
  flex: none;
  width: ${(p) => p.$w}px;
  height: ${(p) => p.$h}px;
  display: flex;
  align-items: center;
  justify-content: center;
`;
const Thumb = styled.span`
  flex: none;
  width: ${(p) => p.$w}px;
  height: ${(p) => p.$h}px;
  background: ${(p) => (p.$dark ? "#bababa" : "#cdcdcd")};
`;
const Fill = styled.span`
  flex: 1;
`;

/* ---------- toolbox ---------- */

const Toolbox = styled.section`
  width: 300px;
  height: 491px;
  margin-left: 4px;
  display: flex;
  flex-direction: column;
`;
const SearchRow = styled.div`
  height: 26px;
  display: flex;
  align-items: center;
  background: #f1f1f1;
`;
const SearchField = styled.div`
  flex: none;
  width: 241px;
  height: 22px;
  margin-left: auto;
  margin-right: 2px;
  padding: 0 8px 0 5px;
  display: flex;
  align-items: center;
  justify-content: space-between;
  background: #fff;
  border: 1px solid #e4e4e4;
  font-size: 11px;
  color: #8e8e8e;
`;
const Catalog = styled.div`
  height: 210px;
  display: flex;
  background: #fcfcfc;
  overflow: hidden;
`;
const CatalogBody = styled.div`
  flex: 1;
  height: 210px;
  overflow: hidden;
  padding: 2px 9px 0 10px;
`;
const Category = styled.div`
  height: 87.400px;
`;
const CategoryTitle = styled.div`
  height: 18px;
  display: flex;
  align-items: center;
  gap: 4px;
  white-space: nowrap;
  font-size: 12px;
  letter-spacing: -0.36px;
  color: #3d62b5;
  &::after {
    content: "";
    flex: 1;
    height: 1px;
    background: #ccd8f0;
  }
`;
const CatalogItem = styled.div`
  width: 59px;
  height: 50px;
  display: flex;
  flex-direction: column;
  align-items: center;
  padding-top: 4px;
  font: 11px ${classic};
  letter-spacing: -0.1px;
  color: #222;
`;
const CatalogPick = styled.div`
  display: flex;
  align-items: center;
  gap: 3px;
  height: 25px;
  margin-bottom: 3px;
`;
const Splitter = styled.div`
  height: 3px;
  background: #a5a5a5;
`;
const FileTable = styled.div`
  flex: 1;
  background: #fff;
`;
const FileHead = styled.div`
  height: 19px;
  display: flex;
  align-items: center;
  font: 11px ${classic};
  color: #222;
`;
const FileRow = styled.div`
  height: 16px;
  display: flex;
  align-items: center;
  font: 11px ${classic};
  color: ${(p) => (p.$selected ? "#fff" : "#222")};
  white-space: nowrap;
  overflow: hidden;
`;
const FileIcon = styled.span`
  flex: none;
  width: 17px;
  padding-left: 4px;
`;
const FileName = styled.span`
  flex: none;
  width: 135px;
  height: 15px;
  line-height: 15px;
  padding-left: 1.500px;
  letter-spacing: -0.2px;
  background: ${(p) => (p.$selected ? "#0078d7" : "transparent")};
`;
const FileDesc = styled.span`
  flex: 1;
  height: 15px;
  line-height: 15px;
  padding-left: 6px;
  overflow: hidden;
  letter-spacing: -0.15px;
  background: ${(p) => (p.$selected ? "#0078d7" : "transparent")};
`;
const FileHeadName = styled.span`
  width: 152px;
  height: 100%;
  line-height: 20px;
  padding-left: 5px;
  border-right: 1px solid #e0e0e0;
`;
const FileHeadDesc = styled.span`
  padding-left: 6px;
  letter-spacing: -0.1px;
`;
const files = [
  ["fileYellow", "Existing File", "Existing source-, data object-, declaration file"],
  ["fileNew", "New File", "A new source-, data object-, declaration file"],
  ["package", "Package", "Empty package"],
  ["fileYellow", "Referenced File", "A reference to an existing source file"],
  ["tconfig", "Textsystem Configuration", "Configuration of textsystem settings"],
];

const SideRail = styled.aside`
  width: 21px;
  padding: 4px 0 0 2px;
`;
const SideTab = styled.div`
  height: 160px;
  padding-top: 2px;
  display: flex;
  flex-direction: column;
  align-items: center;
  gap: 5px;
  border: 1px solid #adadad;
  border-right: 0;
  border-radius: 3px 0 0 3px;
  background: #d6d6d6;
`;
const SideLabel = styled.span`
  writing-mode: vertical-rl;
  white-space: nowrap;
  font: 11.500px ${classic};
  color: #777;
`;

/* ---------- annotations ---------- */

const Markup = styled.svg`
  position: absolute;
  left: -1px;
  top: -1px;
  width: 1215px;
  height: 574px;
  pointer-events: none;
`;
const Callout = styled.span`
  position: absolute;
  left: ${(p) => p.$x}px;
  top: ${(p) => p.$y}px;
  font: 24px/24px Lato, sans-serif;
  color: #fe0000;
`;

const PanelButtons = () => (
  <>
    <Icon name="caretDown" size={9} color="#fff" />
    <Icon name="pin" size={9} color="#fff" />
    <Icon name="close" size={9} color="#fff" />
  </>
);

const TreeNode = ({ node }) => (
  <TreeRow $selected={node.selected}>
    <TreeName>
      {Array.from({ length: node.level - 1 }, (_, i) => (
        <Guide key={i} />
      ))}
      <Guide $branch $last={node.last}>
        {!node.leaf && <ExpanderBox $open={node.open} />}
      </Guide>
      <TreeIcon>
        <Icon name={node.icon} size={13} />
      </TreeIcon>
      <TreeLabel $editing={node.selected}>{node.name}</TreeLabel>
    </TreeName>
    <span>{node.desc}</span>
  </TreeRow>
);

const editorTools = ["alignLeft", "alignTop", "alignRight", "alignBottom", "centerV", "centerH", "front", "forward", "backward", "back", "gear", "palette", "docStar"];

const CatalogSection = ({ title, icon, label, size = 25 }) => (
  <Category>
    <CategoryTitle>{title}</CategoryTitle>
    <CatalogItem>
      <CatalogPick>
        <Checkbox $size={13} />
        <Icon name={icon} size={size} />
      </CatalogPick>
      {label}
    </CatalogItem>
  </Category>
);

export default function App() {
  return (
    <>
      <Global />
      <Screen>
        <Window>
          <TitleBar>
            <Icon name="logo" size={16} />
            <Title>
              C:\Users\strickers\Documents\Samples\mappView\mappViewSample\mappViewSample.apj/Config1 - Automation Studio V 4.5.4.123 SP # AS Single Computer License
            </Title>
            <WindowButton><Icon name="minimize" size={11} color="#000" /></WindowButton>
            <WindowButton><Icon name="maximize" size={11} color="#000" /></WindowButton>
            <WindowButton><Icon name="closeThin" size={11} color="#000" /></WindowButton>
          </TitleBar>
          <MenuBar>
            {menus.map(([label, width]) => (
              <MenuItem key={label} $width={width}>{label}</MenuItem>
            ))}
          </MenuBar>
          <ToolbarRow>
            {groups.map((g) => (
              <ToolGroup key={g.icons[0]} $width={g.width}>
                <Grip />
                {g.icons.map((name, i) => (
                  <ToolItem key={i} name={name} />
                ))}
                <Overflow><Icon name="overflow" size={8} color="#111" /></Overflow>
              </ToolGroup>
            ))}
          </ToolbarRow>
          <Workspace>
            <ConfigPanel>
              <PanelHeader>
                <PanelTitle>Configuration View</PanelTitle>
                <PanelButtons />
              </PanelHeader>
              <ConfigBody>
                <PanelTools $top={3} $left={2.500}>
                  {["clusterNew", "boxNew", "table", "form"].map((name) => (
                    <Slot key={name}><Icon name={name} size={15} /></Slot>
                  ))}
                </PanelTools>
                <TreeHeader>
                  <TreeHeadCell $width={179}>Configuration</TreeHeadCell>
                  <TreeHeadCell $width={64}>Batch</TreeHeadCell>
                  <TreeHeadCell $width={58}>Description</TreeHeadCell>
                </TreeHeader>
                <TreeRow>
                  <TreeName $root>
                    <RootExpander><ExpanderBox $open /></RootExpander>
                    <TreeIcon $width={29}><Icon name="cluster" size={13} /></TreeIcon>
                    <RootLabel>Config1 [Active]</RootLabel>
                    <BatchCell><Checkbox $size={10} /></BatchCell>
                  </TreeName>
                </TreeRow>
                {tree.map((node) => (
                  <TreeNode key={node.name} node={node} />
                ))}
              </ConfigBody>
            </ConfigPanel>

            <Editor>
              <TabStrip>
                <Tab $width={295}>
                  <Icon name="mfile" size={13} />
                  Config.mpaudittrail [mappServices Configuration]
                </Tab>
                <Tab $active $width={209}>
                  <Icon name="contentFile" size={14} />
                  Start.content [Content Editor]*
                  <TabEnd $pad={7}><Icon name="close" size={8} color="#222" /></TabEnd>
                </Tab>
                <TabEnd $pad={4}><Icon name="caretDown" size={9} color="#444" /></TabEnd>
              </TabStrip>
              <PanelTools $top={0} $bottom={2} $left={1.500}>
                {editorTools.map((name) => (
                  <Slot key={name} $width={22.450}><Icon name={name} size={15} /></Slot>
                ))}
              </PanelTools>
              <EditorFrame>
                <EditorMain>
                  <Viewport>
                    <Canvas>
                      <PageTitle>Start Page</PageTitle>
                      <NumericBox>0.0</NumericBox>
                      <Selection>
                        <AuditList>
                          <AuditTitle>AuditListItem1</AuditTitle>
                          {auditRows.map((text, i) => (
                            <AuditRow key={text} $alt={i % 2 === 0}>{text}</AuditRow>
                          ))}
                        </AuditList>
                        <Handle $x={-4} $y={-4} />
                        <Handle $x={390} $y={-4} />
                        <Handle $x={-4} $y={194} />
                        <MoveHandle><Icon name="move" size={11} /></MoveHandle>
                      </Selection>
                    </Canvas>
                  </Viewport>
                  <VScroll $width={16}>
                    <ArrowCell $w={16} $h={15}><Icon name="triUp" size={7} color="#8a8a8a" /></ArrowCell>
                    <Thumb $dark $w={14} $h={278} />
                    <Fill />
                    <ArrowCell $w={16} $h={17}><Icon name="caretDown" size={6} color="#555" /></ArrowCell>
                  </VScroll>
                </EditorMain>
                <HScroll $height={17}>
                  <ArrowCell $w={18} $h={15}><Icon name="triLeft" size={7} color="#8a8a8a" /></ArrowCell>
                  <Thumb $dark $w={348} $h={14} />
                  <Fill />
                  <ArrowCell $w={50} $h={15}><Icon name="triRight" size={7} color="#444" /></ArrowCell>
                </HScroll>
              </EditorFrame>
            </Editor>

            <Toolbox>
              <PanelHeader $active>
                <PanelTitle>Toolbox - Object Catalog</PanelTitle>
                <PanelButtons />
              </PanelHeader>
              <SearchRow>
                <Grip $gap={2} />
                <Slot $width={19}><Icon name="listView" size={11} /></Slot>
                <Icon name="caretDown" size={5} />
                <Separator />
                <Slot $width={19}><Icon name="filterOff" size={13} /></Slot>
                <SearchField>
                  Search...
                  <Icon name="search" size={10} />
                </SearchField>
              </SearchRow>
              <Catalog>
                <CatalogBody>
                  <CatalogSection title="Technology Packages" icon="folderBigT" label="TextSystem" />
                  <CatalogSection title="Files" icon="fileStar" label="File" />
                  <CatalogSection title="Packages" icon="folderBig" />
                </CatalogBody>
                <VScroll $width={16}>
                  <ArrowCell $w={15} $h={17}><Icon name="chevUp" size={9} color="#505050" /></ArrowCell>
                  <Thumb $w={15} $h={140} />
                  <Fill />
                  <ArrowCell $w={15} $h={18}><Icon name="chevDown" size={9} color="#505050" /></ArrowCell>
                </VScroll>
              </Catalog>
              <Splitter />
              <FileTable>
                <FileHead>
                  <FileHeadName>Name</FileHeadName>
                  <FileHeadDesc>Description</FileHeadDesc>
                </FileHead>
                {files.map(([icon, name, desc], i) => (
                  <FileRow key={name} $selected={i === 4}>
                    <FileIcon><Icon name={icon} size={12} /></FileIcon>
                    <FileName $selected={i === 4}>{name}</FileName>
                    <FileDesc $selected={i === 4}>{desc}</FileDesc>
                  </FileRow>
                ))}
              </FileTable>
              <HScroll $height={17}>
                <ArrowCell $w={17} $h={15}><Icon name="chevLeft" size={8} color="#505050" /></ArrowCell>
                <Thumb $w={195} $h={15} />
                <Fill />
                <ArrowCell $w={18} $h={15}><Icon name="chevRight" size={8} color="#505050" /></ArrowCell>
              </HScroll>
            </Toolbox>

            <SideRail>
              <SideTab>
                <Icon name="props" size={15} />
                <SideLabel>Properties - AuditList1</SideLabel>
              </SideTab>
            </SideRail>
          </Workspace>
        </Window>
        <Backdrop />

        <Markup viewBox="0 0 1215 574">
          <g fill="none" stroke="#fe0000">
            <rect x="20.500" y="254.500" width="148" height="26" strokeWidth="5" />
            <rect x="881.500" y="415.500" width="166" height="38" strokeWidth="5" />
            <path d="M875 436.500L182 285" strokeWidth="4.500" />
            <path d="M196.500 275.500L181 284.500L192 298" strokeWidth="4.500" />
          </g>
          <path d="M1014.500 493.500v15.500l3.700-3.300 2.500 5.800 2.800-1.200-2.500-5.500h4.800z" fill="#fff" stroke="#1c1c28" strokeWidth="1.100" />
        </Markup>
        <Callout $x={171} $y={230}>1</Callout>
        <Callout $x={1052} $y={448}>2</Callout>
      </Screen>
    </>
  );
}
